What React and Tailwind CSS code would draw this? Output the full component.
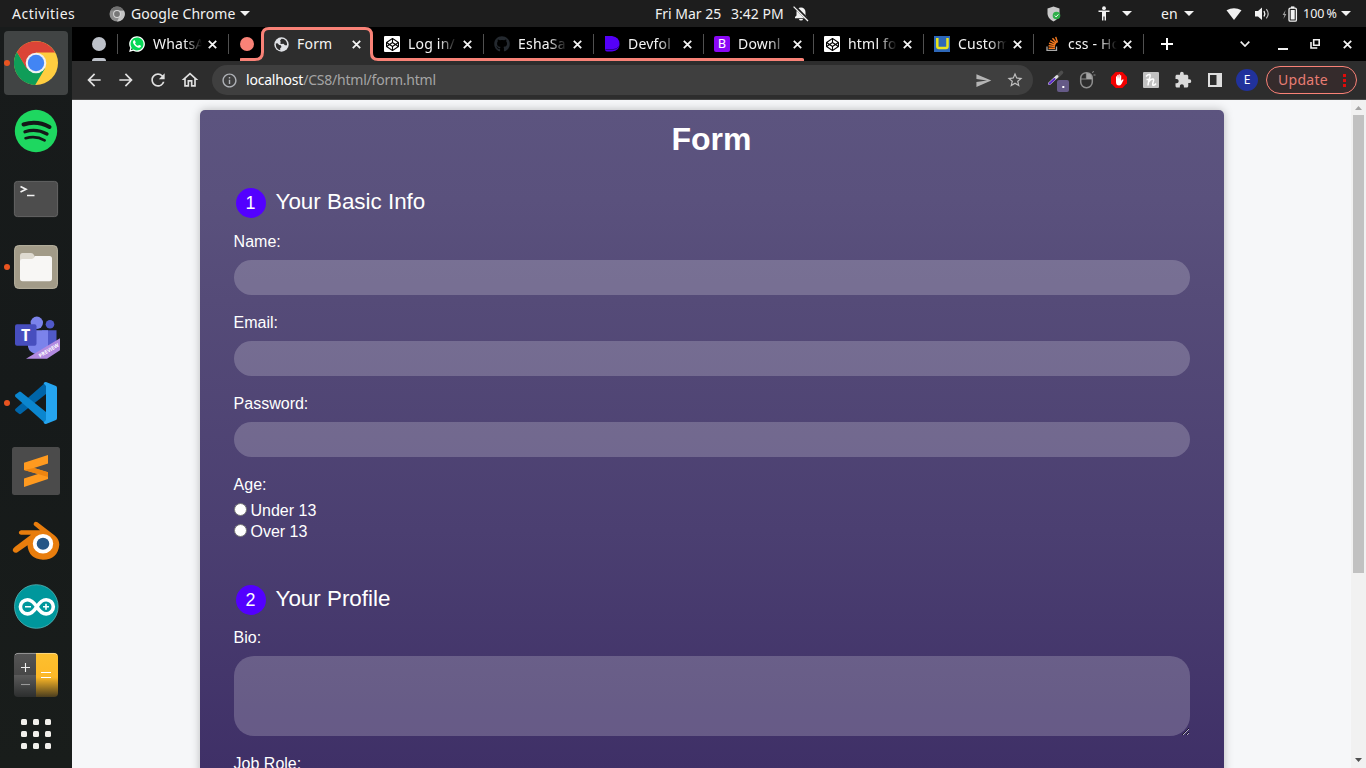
import React from "react";
import {
  MdArrowBack, MdArrowForward, MdRefresh, MdOutlineHome, MdInfoOutline, MdSend,
  MdStarBorder, MdExtension,
} from "react-icons/md";
import { FaGithub, FaWhatsapp, FaCodepen } from "react-icons/fa";

const UI = "font-['Noto_Sans',sans-serif]";

function Caret() {
  return (
    <svg className="h-[5px] w-[10px] shrink-0" viewBox="0 0 10 5"><path d="M0 0H10L5 5Z" fill="#f2f2f2" /></svg>
  );
}

function TopBar() {
  return (
    <header className={`flex h-[27px] shrink-0 items-center bg-[#1d1d1d] text-[14px] leading-[27px] text-[#f2f2f2] ${UI}`}>
      <div className="ml-3 w-[97px] tracking-[0.5px]">Activities</div>
      <svg className="h-4 w-4 shrink-0" viewBox="0 0 16 16">
        <circle cx="8" cy="8" r="7.5" fill="#8d8d8d" />
        <path d="M8 4.5H15A7.5 7.5 0 0 1 8 15.5L11 9.5Z" fill="#c4c4c4" />
        <path d="M1.5 4.5A7.5 7.5 0 0 1 14.8 4.5H8Z" fill="#707070" />
        <circle cx="8" cy="8" r="3.9" fill="#d8d8d8" /><circle cx="8" cy="8" r="2.9" fill="#777" />
      </svg>
      <div className="ml-[6px] w-[109px] whitespace-nowrap tracking-[0.08px]">Google Chrome</div>
      <Caret />
      <div className="ml-[405px] w-[76px] whitespace-nowrap">Fri Mar 25</div>
      <div className="w-[62px] whitespace-nowrap">3:42 PM</div>
      <svg className="h-4 w-4 shrink-0" viewBox="0 0 16 16">
        <path d="M2 12.3V11L3.5 9.5V6A4.5 4.5 0 0 1 12.5 6V9.5L14 11V12.3ZM6 13H10A2 1.6 0 0 1 6 13Z" fill="#f2f2f2" />
        <path d="M1.2 0L16 15" stroke="#1d1d1d" strokeWidth="3" /><path d="M0.6 0.6L15 15" stroke="#f2f2f2" strokeWidth="1.3" />
      </svg>
      <svg className="ml-[238px] h-4 w-4 shrink-0" viewBox="0 0 16 16">
        <path d="M6.5 .5L12.5 2.5V8Q12 13 6.5 15.5Q1 13 .5 8V2.5Z" fill="#c9c9c9" />
        <circle cx="9.5" cy="9.5" r="3.8" fill="#2fae48" /><path d="M7.8 9.6L9.1 10.9L11.4 8.4" stroke="#fff" fill="none" />
      </svg>
      <svg className="ml-[35px] h-4 w-3 shrink-0" viewBox="0 0 12 16">
        <circle cx="6" cy="2.2" r="1.9" fill="#f2f2f2" />
        <path d="M.5 4.4H11.5V6H8V14.6H6.6V10.5H5.4V14.6H4V6H.5Z" fill="#f2f2f2" />
      </svg>
      <div className="ml-[12px] flex"><Caret /></div>
      <div className="ml-[29px] w-[23px]">en</div>
      <Caret />
      <svg className="ml-[32px] h-3 w-4 shrink-0" viewBox="0 0 16 12"><path d="M.5 2.3Q8 -2 15.5 2.3L8 12Z" fill="#f2f2f2" /></svg>
      <svg className="ml-[13px] h-4 w-4 shrink-0" viewBox="0 0 16 16">
        <path d="M0 5H3L7 1.5V14L3 10.5H0Z" fill="#f2f2f2" />
        <path d="M9 5Q10.6 7.8 9 10.5" stroke="#f2f2f2" strokeWidth="1.4" fill="none" />
        <path d="M11.3 3.2Q15 7.8 11.3 12.3" stroke="#bdbdbd" strokeWidth="1.2" fill="none" />
      </svg>
      <svg className="ml-[11px] h-4 w-[16px] shrink-0" viewBox="0 0 16 16">
        <path d="M3.6 4L.6 9H2.4L1.4 13L4.4 8H2.6Z" fill="#a0a0a0" />
        <rect x="7" y="2.2" width="7.4" height="13" rx="1.3" fill="none" stroke="#f2f2f2" strokeWidth="1.3" />
        <rect x="9" y="0.4" width="3.4" height="1.8" fill="#f2f2f2" /><rect x="8.7" y="4" width="4" height="9.5" fill="#f2f2f2" />
      </svg>
      <div className="ml-[5px] w-[38px] whitespace-nowrap text-[12.5px]">100&#8201;%</div>
      <Caret />
    </header>
  );
}

function Slot({ running, active, children }) {
  return (
    <div className={`relative flex h-16 w-16 shrink-0 items-center justify-center rounded-[4px] ${active ? "bg-[#414444]" : ""}`}>
      {running && <i className="absolute left-0 top-[29px] h-[6px] w-[6px] rounded-full bg-[#e95420]" />}
      {children}
    </div>
  );
}

function Icon({ children }) {
  return <svg className="h-12 w-12" viewBox="0 0 48 48">{children}</svg>;
}

function Dock() {
  return (
    <nav className="flex w-[72px] shrink-0 flex-col items-center gap-1 overflow-hidden bg-linear-to-b from-[#181b1b] via-[#161a1a] to-[#191d1b] pt-1">
      <Slot running active>
        <Icon>
          <circle cx="24" cy="24" r="22" fill="#ffcd40" />
          <path d="M24 24L4.9 13A22 22 0 0 1 43.1 13.6H24Z" fill="#db4437" />
          <path d="M4.9 13A22 22 0 0 0 23.2 46L33 29.5L15 29.3Z" fill="#0f9d58" />
          <path d="M4.9 13L14.6 29.5L24 24L24 13.6Z" fill="#db4437" />
          <circle cx="24" cy="24" r="10.3" fill="#f1f1f1" /><circle cx="24" cy="24" r="8.2" fill="#4285f4" />
        </Icon>
      </Slot>
      <Slot>
        <Icon>
          <circle cx="24" cy="24" r="21.2" fill="#1ed760" />
          <g fill="none" stroke="#141818" strokeLinecap="round">
            <path d="M11.5 17.5Q25 13.2 37.5 20" strokeWidth="4" /><path d="M13 24.7Q24.5 21 35 27" strokeWidth="3.3" /><path d="M13.6 31.2Q24 28.3 32.6 33.3" strokeWidth="2.7" />
          </g>
        </Icon>
      </Slot>
      <Slot>
        <Icon>
          <rect x="2.4" y="6.4" width="43.2" height="35.2" rx="3" fill="#4d4d4d" stroke="#6a6a6a" strokeWidth=".9" />
          <path d="M8.500 11.500L14 14.300L8.500 17.100M15 20.500H22.500" fill="none" stroke="#f2f2f2" strokeWidth="1.700" />
        </Icon>
      </Slot>
      <Slot running>
        <Icon>
          <rect x="2.6" y="2.6" width="42.8" height="42.8" rx="4" fill="#a29b88" stroke="#bab4a2" />
          <path d="M8 21V13Q8 10 10.5 10H19Q21 10 22 12L23.5 15H38V21Z" fill="#dedad0" />
          <path d="M8 18Q8 16 10.5 16H20Q22 16 23 13H37.5Q40 13 40 15.5V35.5Q40 38.3 37.5 38.3H10.5Q8 38.3 8 35.5Z" fill="#f8f7f5" />
        </Icon>
      </Slot>
      <Slot>
        <Icon>
          <g transform="translate(0 1.800)">
            <circle cx="24.8" cy="10" r="6.2" fill="#7b83eb" /><circle cx="38" cy="11.5" r="4.3" fill="#5059c9" />
            <path d="M30 17.5H44.5V31Q44 37 36 37H30Z" fill="#5059c9" />
            <path d="M16 17.5H36V34Q35 42 26 42Q17 40 16 34Z" fill="#7b83eb" />
            <rect x="3" y="11.500" width="21.5" height="21.5" rx="2" fill="#474ebe" />
            <text x="13.7" y="28" textAnchor="middle" fontSize="16" fontWeight="700" fill="#fff" fontFamily="Open Sans, sans-serif">T</text>
            <path d="M14 46L48 25.5V37.5L35 46Z" fill="#b28ae0" />
            <text x="28" y="45" fontSize="5.2" fontWeight="700" fill="#fff" fontFamily="Open Sans, sans-serif" transform="rotate(-31 28 45)">PREVIEW</text>
          </g>
        </Icon>
      </Slot>
      <Slot running>
        <Icon>
          <path d="M3.5 32L7 34.8Q8 35.5 9 34.8L34 15V3L3.3 30Q2.6 31 3.5 32Z" fill="#0065a9" />
          <path d="M3.5 15.5L7 12.9Q8 12.3 9 13L34 33V45L3.3 17.8Q2.6 16.5 3.5 15.5Z" fill="#0b86cf" />
          <path d="M34 3L44 7Q45 7.5 45 9V39Q45 40.5 44 41L34 45Q32.5 45 31.5 43.8L34 41V7L31.5 4.2Q32.5 3 34 3Z" fill="#25a5f0" />
        </Icon>
      </Slot>
      <Slot>
        <Icon>
          <rect width="48" height="48" rx="2.5" fill="#4b4b4b" />
          <path d="M12 15.8L36 8V16.5L22 21L36 25.2V32L12 40V31.5L26 27L12 23Z" fill="#ff9a1f" />
          <path d="M12 23L22 21L36 25.2V30L26 27Z" fill="#ee8510" />
        </Icon>
      </Slot>
      <Slot>
        <Icon>
          <path d="M3 32.500L19 20.500H9Q6.800 20 6.800 18.300T9 16H28L22 11Q21 9 22.800 7.700Q24 7 25.500 8L43 21.500Q47.400 25.500 47.300 30.500Q46 45 31 45.500Q16.500 44.500 15.500 31L5.500 38Q3 39.300 1.300 37.200T3 32.500Z" fill="#e87d0d" transform="translate(0 -.7)" />
          <ellipse cx="31" cy="28.700" rx="10.2" ry="9.8" fill="#fff" /><ellipse cx="31" cy="28.700" rx="6.3" ry="6" fill="#265787" />
        </Icon>
      </Slot>
      <Slot>
        <Icon>
          <circle cx="24.3" cy="23.500" r="21.8" fill="#00979c" stroke="#56b5b8" strokeWidth=".8" />
          <g transform="translate(.5 .7)">
            <path d="M24.3 23C20 16.5 17.5 16 15 16A7 7 0 0 0 15 30.2C18 30.2 20.5 29 24.3 23C28.500 16.5 31 16 33.7 16A7 7 0 0 1 33.7 30.2C30.5 30.2 28 29 24.3 23Z" fill="none" stroke="#fff" strokeWidth="3.600" />
            <path d="M12.5 23H18.5M30.5 23H36.5M33.5 20V26" stroke="#fff" strokeWidth="1.6" />
          </g>
        </Icon>
      </Slot>
      <Slot>
        <Icon>
          <defs>
            <linearGradient id="keys" x2="0" y2="1"><stop offset="0" stopColor="#555" /><stop offset=".5" stopColor="#474747" /><stop offset=".5" stopColor="#5b5b5b" /><stop offset="1" stopColor="#2c2e2e" /></linearGradient>
            <linearGradient id="equals" x2="0" y2="1"><stop offset="0" stopColor="#fdc02f" /><stop offset=".55" stopColor="#fdb827" /><stop offset="1" stopColor="#4a3d1e" /></linearGradient>
          </defs>
          <path d="M24 2H6Q2 2 2 6V42Q2 46 6 46H24Z" fill="url(#keys)" />
          <path d="M24 2H42Q46 2 46 6V42Q46 46 42 46H24Z" fill="url(#equals)" />
          <path d="M3 4Q4 2.4 6 2.4H42Q44 2.4 45 4" stroke="#ffffff66" fill="none" />
          <path d="M9 16.5H18M13.5 12V21" stroke="#eee" strokeWidth="1.1" /><path d="M9 33.5H18" stroke="#999" strokeWidth="1.1" />
          <path d="M29 21.5H39M29 26.5H39" stroke="#fff" strokeWidth="1.1" />
        </Icon>
      </Slot>
      <div className="mt-2 grid shrink-0 grid-cols-3 gap-[6px]">
        {Array.from({ length: 9 }, (_, i) => <i key={i} className="h-[6px] w-[6px] rounded-[1.5px] bg-[#f2f0ec]" />)}
      </div>
    </nav>
  );
}

function Cross() {
  return (
    <svg className="h-[9px] w-[9px] shrink-0" viewBox="0 0 9 9"><path d="M.8 .8L8.2 8.2M8.2 .8L.8 8.2" stroke="#f4f4f4" strokeWidth="1.8" /></svg>
  );
}

function Tab({ icon, title, active }) {
  return (
    <div className={`flex h-[34px] shrink-0 items-center text-[14px] ${active ? "w-[112px] pl-[11px]" : "w-[110px] pl-[10px]"}`}>
      <span className="flex h-4 w-4 shrink-0 items-center justify-center">{icon}</span>
      <span className={`ml-2 mr-[3px] w-[52px] whitespace-nowrap pb-[2px] tracking-[0.2px] text-[#f4f4f4] ${active ? "" : "mask-r-from-60% mask-r-to-94%"}`}>{title}</span>
      <Cross />
      {!active && <i className="ml-auto h-5 w-px bg-[#505050]" />}
    </div>
  );
}

const codepen = <span className="flex h-4 w-4 items-center justify-center rounded-[1px] bg-white"><FaCodepen className="text-black" size={13} /></span>;

const whatsapp = (
  <span className="flex h-4 w-4 items-center justify-center rounded-full bg-radial from-[#06d755] from-60% to-transparent to-70%">
    <FaWhatsapp size={18} className="shrink-0 text-white" />
  </span>
);

function Globe() {
  return (
    <svg className="h-[15px] w-[15px]" viewBox="0 0 15 15">
      <circle cx="7.500" cy="7.500" r="7.200" fill="#dfe1e5" />
      <path d="M1.800 6.500L3.500 6.200L5.200 8L6.800 8.200L7.500 10L6.200 11.200V13.200Q2 12.200 1.800 7.500Z" fill="#2d2d2d" />
      <path d="M7.500 1.800L6 3.800L7 5.200L5.800 6L7.200 7L9.500 6.800L11 8.300L13 8.200Q13.500 3.500 9.500 1.900Z" fill="#2d2d2d" />
    </svg>
  );
}

function TabStrip() {
  return (
    <div className={`relative flex h-[34px] shrink-0 items-center bg-black ${UI}`}>
      <div className="flex h-full w-[45px] flex-col items-center pl-[9px] pt-[10px]">
        <i className="h-[14px] w-[14px] shrink-0 rounded-full bg-[#bdc1c9]" />
        <i className="mt-[7px] h-[3px] w-[14px] shrink-0 rounded-t-[3px] bg-[#bdc1c9]" />
      </div>
      <div className="mr-px h-5 w-px bg-[#505050]" />
      <Tab title="WhatsA" icon={whatsapp} />
      <div className="flex w-[33px] shrink-0 pl-[11px]"><i className="h-[14px] w-[14px] rounded-full bg-[#f98277]" /></div>
      <svg className="pointer-events-none absolute left-[168px] top-0 h-[34px] w-[564px]" viewBox="0 0 564 34">
        <path d="M15 34Q22.500 32.500 22.500 25V8Q22.500 1.500 29 1.500H125Q131.500 1.500 131.500 8V26Q131.500 32.500 138 34Z" fill="#2d2d2d" />
        <path d="M0 34Q0 32.500 2 32.500H15Q22.500 32.500 22.500 25V8Q22.500 1.500 29 1.500H125Q131.500 1.500 131.500 8V26Q131.500 32.500 138 32.500H562Q563 32.500 563 34" stroke="#f98277" strokeWidth="3" fill="none" />
      </svg>
      <div className="relative flex">
        <Tab active title="Form" icon={<Globe />} />
        <Tab title="Log in/" icon={codepen} />
        <Tab title="EshaSa" icon={<FaGithub size={16} color="#24292f" />} />
        <Tab title="Devfol" icon={<svg width="16" height="16" viewBox="0 0 16 16"><path d="M1 0H8Q15.5 1 15.5 8T8 15.5H3Q1 15.5 1 13Z" fill="#5400f8" /><path d="M1.5 13.6H9Q13 13 15 10.5" fill="none" stroke="#1d006b" strokeWidth=".8" /></svg>} />
        <Tab title="Downl" icon={<span className="flex h-4 w-4 items-center justify-center rounded-[2px] bg-[#8a08f5] font-['Roboto',sans-serif] text-[13px] leading-4 text-white">B</span>} />
        <Tab title="html fo" icon={codepen} />
        <Tab title="Custom" icon={<svg width="16" height="16" viewBox="0 0 16 16"><rect width="16" height="16" fill="#2d67b8" /><path d="M3.300 2V10.500Q3.300 12 5 12H12Q13.500 12 13.500 10.500V2" stroke="#e8e51b" strokeWidth="2.5" fill="none" /></svg>} />
        <Tab title="css - Ho" icon={<svg width="16" height="16" viewBox="0 0 16 16"><path d="M3 10.500V14.300H12.500V10.500" stroke="#a9a9a9" strokeWidth="1.300" fill="none" /><path d="M4.600 12.300H11M4.600 9.800L11 10.500M5 7.300L11.300 9M6.200 4.600L11.900 7.800M8.500 2.200L12.600 7M11.700 .9L13.500 6.500" stroke="#f47a20" strokeWidth="1.400" /></svg>} />
      </div>
      <svg className="ml-[17px] h-3 w-3 shrink-0" viewBox="0 0 12 12"><path d="M6 0V12M0 6H12" stroke="#fff" strokeWidth="2" /></svg>
      <svg className="ml-[67px] h-[6px] w-[10px] shrink-0" viewBox="0 0 10 6"><path d="M.7 .7L5 5L9.3 .7" stroke="#eee" strokeWidth="1.7" fill="none" /></svg>
      <i className="ml-[28px] mt-[9px] h-[2px] w-[10px] shrink-0 bg-[#eee]" />
      <svg className="ml-[22px] h-[10px] w-[10px] shrink-0" viewBox="0 0 10 10"><path d="M3.7 .8H9.2V6.3H3.7ZM1 3V9H7.3" stroke="#eee" strokeWidth="1.6" fill="none" /></svg>
      <div className="ml-[23px]"><Cross /></div>
    </div>
  );
}

function Toolbar() {
  return (
    <div className={`flex h-[39px] shrink-0 items-center border-b border-[#4a4a4a] bg-[#2d2d2d] text-[#e0e0e0] ${UI}`}>
      <MdArrowBack className="ml-3 shrink-0" size={20} />
      <MdArrowForward className="ml-3 shrink-0" size={20} />
      <MdRefresh className="ml-3 shrink-0" size={20} />
      <MdOutlineHome className="ml-3 shrink-0" size={20} />
      <div className="ml-[12px] flex h-[30px] w-[821px] shrink-0 items-center rounded-full bg-[#3f3f3f] pl-[9px] text-[14px]">
        <MdInfoOutline size={17} color="#b0b3b8" />
        <div className="ml-2 flex-1 whitespace-nowrap pb-[2px] tracking-[-0.22px] text-[#a5a5a5]"><span className="text-white">localhost</span>/CS8/html/form.html</div>
        <MdSend size={17} color="#b5b5b5" />
        <MdStarBorder className="ml-[14px] mr-[9px]" size={18} color="#c0c0c0" />
      </div>
      <svg className="ml-[14px] h-[24px] w-[22px] shrink-0" viewBox="0 0 22 24">
        <path d="M10 9L14.500 4.500" stroke="#4d4d4d" strokeWidth="3.600" strokeLinecap="round" />
        <path d="M2.500 15.500L10 8.500" stroke="#ddd" strokeWidth="3" strokeLinecap="round" /><path d="M2.500 15.600L7.500 11" stroke="#5b28c8" strokeWidth="2" strokeLinecap="round" />
        <rect x="10" y="12" width="12" height="12" rx="2" fill="#655a87" /><rect x="15.300" y="18" width="2" height="2" fill="#fff" />
      </svg>
      <svg className="ml-[10px] h-[18px] w-[17px] shrink-0" viewBox="0 0 17 18">
        <rect x="1.700" y="1.700" width="11.600" height="15" rx="5.600" stroke="#8e8e8e" strokeWidth="1.500" fill="none" />
        <path d="M7.500 2V8H1.500M7.500 8H13.500" stroke="#8e8e8e" strokeWidth="1.200" fill="none" /><path d="M8 2Q13 2 13 8H8Z" fill="#a5a5a5" /><path d="M13 1.500L15 .5M14.500 4H16.500" stroke="#8e8e8e" />
      </svg>
      <svg className="ml-[15px] h-4 w-4 shrink-0" viewBox="0 0 16 16">
        <path d="M4.700 0H11.300L16 4.700V11.300L11.300 16H4.700L0 11.300V4.700Z" fill="#f20000" />
        <path d="M5 9V4.500Q5.500 3.800 6 4.500V7.500L6.300 3Q7 2.400 7.300 3V7L7.700 2.400Q8.400 1.800 8.700 2.400V7L9.200 3.300Q9.800 2.700 10.200 3.400V8.800L11.500 7.400Q12.600 7 12.500 8L10.500 12Q9.500 13.600 8 13.600Q5 13.500 5 10Z" fill="#fff" />
      </svg>
      <span className="ml-4 flex h-4 w-4 shrink-0 items-center justify-center rounded-[1px] bg-[#c1c1c1]">
        <svg width="12" height="14" viewBox="0 0 12 14"><path d="M1 3.500Q3 1 4.800 1.500Q5.800 3 3.800 7L3 12.500M3.500 9Q6 5.500 8 6Q9.200 6.500 8.300 8.500Q7 12.500 8.500 12.300Q10 12 11 10.500M1.500 6.500H6" stroke="#fff" strokeWidth="1.500" fill="none" /></svg>
      </span>
      <MdExtension className="ml-[15px] shrink-0" size={18} color="#dadada" />
      <svg className="ml-[16px] h-[14px] w-[14px] shrink-0" viewBox="0 0 14 14"><path fillRule="evenodd" d="M0 0H14V14H0ZM2 2V12H8.500V2Z" fill="#dedede" /></svg>
      <span className="ml-[14px] flex h-[22px] w-[22px] shrink-0 items-center justify-center rounded-full bg-[#21329c] text-[12px] text-white">E</span>
      <div className="ml-[8px] flex h-7 w-[91px] shrink-0 items-center rounded-full border border-[#f98277] bg-[#352b2c] pl-[11px] text-[14px] text-[#e87d74]">
        <span className="pb-[2px] tracking-[0.3px]">Update</span>
        <svg className="ml-auto mr-[10px] h-[13px] w-[3px]" viewBox="0 0 3 13"><path d="M0 0H3V3H0ZM0 5H3V8H0ZM0 10H3V13H0Z" fill="#e00b0b" /></svg>
      </div>
    </div>
  );
}

function Legend({ n, children }) {
  return (
    <div className="flex h-[30px] items-start pl-[2px]">
      <span className="h-[30px] w-[30px] rounded-full bg-[#5300ff] pr-px text-center text-[17.920px] leading-[30px]">{n}</span>
      <span className="ml-[9.500px] text-[22.400px] leading-[28px]">{children}</span>
    </div>
  );
}

function Label({ children }) {
  return <span className="-ml-[0.4px] block h-5 leading-5">{children}</span>;
}

function Field({ label }) {
  return (
    <label className="mb-[18px] block">
      <Label>{label}</Label>
      <input className="mt-2 block h-[35px] w-full rounded-[30px] bg-white/20 px-4 outline-none" />
    </label>
  );
}

function Radio({ label }) {
  return (
    <label className="flex h-[21px] items-start leading-[21px]">
      <input type="radio" name="age" className="mt-[3px] h-[13px] w-[13px] shrink-0 appearance-none rounded-full border border-[#767676] bg-white" />
      <span className="ml-[3.500px]">{label}</span>
    </label>
  );
}

function Page() {
  return (
    <div className="flex h-[668px] bg-[#f6f7f9] font-['Liberation_Sans',Arial,sans-serif] text-[16px] text-white">
      <main className="flex flex-1 justify-center overflow-hidden pl-px pt-[10.4px]">
        <form className="h-[805px] w-[1024px] shrink-0 rounded-[5px] bg-linear-[180deg,#5c547f_0px,#5a517d_90px,#554b78_190px,#4b3f71_420px,#3f3067_658px,#372760_805px] px-[34px] pt-[10.6px] shadow-[0_0_10px_rgba(0,0,0,0.25)]">
          <h1 className="h-9 pr-px text-center text-[32px] font-bold leading-9">Form</h1>
          <section className="mt-[31px]">
            <Legend n="1">Your Basic Info</Legend>
            <div className="mt-[14px]">
              <Field label="Name:" />
              <Field label="Email:" />
              <Field label="Password:" />
              <div className="mb-[5px]"><Label>Age:</Label></div>
              <Radio label="Under 13" />
              <Radio label="Over 13" />
            </div>
          </section>
          <section className="mt-[43px]">
            <Legend n="2">Your Profile</Legend>
            <div className="mt-[13px]"><Label>Bio:</Label></div>
            <textarea className="mt-2 block h-20 w-full resize rounded-[20px] bg-white/20 outline-none" />
            <div className="mt-[18px]"><Label>Job Role:</Label></div>
          </section>
        </form>
      </main>
      <div className="flex w-[15px] flex-col items-center bg-[#f1f1f1]">
        <svg className="mt-[6px] h-1 w-[7px]" viewBox="0 0 7 4"><path d="M0 4L3.500 0L7 4Z" fill="#a3a3a3" /></svg>
        <i className="mt-[5px] h-[458px] w-[11px] bg-[#c1c1c1]" />
        <svg className="mb-[6px] mt-auto h-1 w-[7px]" viewBox="0 0 7 4"><path d="M0 0H7L3.500 4Z" fill="#505050" /></svg>
      </div>
    </div>
  );
}

export default function App() {
  return (
    <div className="flex h-[768px] w-[1366px] flex-col overflow-hidden">
      <TopBar />
      <div className="flex min-h-0 flex-1">
        <Dock />
        <div className="flex w-[1294px] flex-col">
          <TabStrip />
          <Toolbar />
          <Page />
        </div>
      </div>
    </div>
  );
}
